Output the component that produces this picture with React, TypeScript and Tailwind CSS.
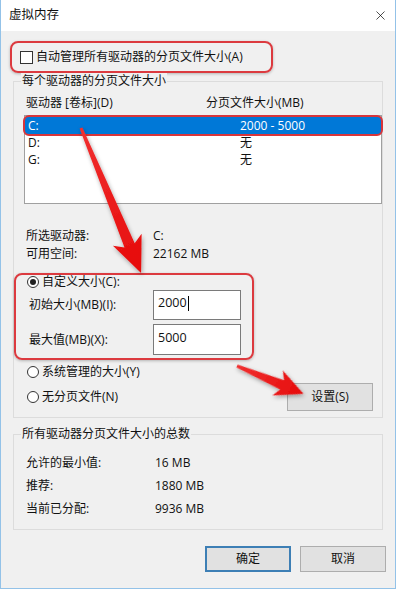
import { X } from "lucide-react"

function Radio({ checked = false }: { checked?: boolean }) {
  return (
    <span className="w-[12px] h-[12px] rounded-full border border-[#333] bg-white flex items-center justify-center shrink-0">
      {checked && <span className="w-[6px] h-[6px] rounded-full bg-[#222]" />}
    </span>
  )
}

function GroupLabel({ children }: { children: React.ReactNode }) {
  return (
    <div className="-mt-[9px] ml-[7px] px-[1px] w-fit h-[16px] leading-[16px] bg-[#f0f0f0]">{children}</div>
  )
}

export default function App() {
  const drives = [
    { name: "C:", size: "2000 - 5000", selected: true },
    { name: "D:", size: "无" },
    { name: "G:", size: "无" },
  ]

  return (
    <div className="relative w-[396px] h-[589px] overflow-hidden bg-[#f0f0f0] border-x border-b border-[#93c2e8] text-[12px] text-[#111] font-['Open_Sans','Noto_Sans_CJK_SC',sans-serif]">
      {/* Title bar */}
      <div className="h-[31px] bg-white flex items-center justify-between pl-[8px] pr-[7px]">
        <span className="leading-none text-[12.5px]">虚拟内存</span>
        <X size={15} strokeWidth={1.1} className="text-black" />
      </div>

      <div className="pl-[9px]">
        {/* Auto manage */}
        <div className="mt-[10px] w-[263px] h-[32px] border-2 border-[#dc3a3f] rounded-[8px] shadow-[0_1px_3px_rgba(0,0,0,0.25)] flex items-center pl-[8px] gap-[3px]">
          <span className="w-[13px] h-[13px] border border-[#333] bg-white shrink-0" />
          <span className="leading-none">自动管理所有驱动器的分页文件大小(A)</span>
        </div>

        {/* Group 1 */}
        <div className="mt-[8px] ml-[3px] w-[370px] h-[337px] border border-[#dcdcdc]">
          <GroupLabel>每个驱动器的分页文件大小</GroupLabel>

          <div className="mt-[6px] h-[16px] flex items-center pl-[12px]">
            <span className="w-[180px]">驱动器 [卷标](D)</span>
            <span>分页文件大小(MB)</span>
          </div>

          <div className="mt-[4px] ml-[10px] w-[358px] h-[89px] border border-[#a0a0a0] bg-white pt-[1px]">
            {drives.map((d) => (
              <div
                key={d.name}
                className={`relative h-[17px] flex items-center pl-[3px] ${d.selected ? "bg-[#0078d7] text-white" : ""}`}
              >
                <span className="w-[212px]">{d.name}</span>
                <span>{d.size}</span>
                {d.selected && (
                  <span className="absolute -inset-x-[2px] -inset-y-[2px] border-2 border-[#d8353b] rounded-[6px]" />
                )}
              </div>
            ))}
          </div>

          <div className="mt-[23px] h-[18px] flex items-center pl-[12px]">
            <span className="w-[127px]">所选驱动器:</span>
            <span>C:</span>
          </div>
          <div className="h-[18px] flex items-center pl-[12px]">
            <span className="w-[127px]">可用空间:</span>
            <span>22162 MB</span>
          </div>

          {/* Custom size */}
          <div className="mt-[10px] w-[240px] h-[87px] border-2 border-[#dc3a3f] rounded-[8px] shadow-[0_1px_3px_rgba(0,0,0,0.25)]">
            <div className="h-[14px] flex items-center pl-[11px] gap-[3px]">
              <Radio checked />
              <span>自定义大小(C):</span>
            </div>
            <div className="mt-[1px] h-[30px] flex items-center pl-[13px]">
              <span className="w-[124px]">初始大小(MB)(I):</span>
              <div className="w-[88px] h-[30px] border border-[#7a7a7a] bg-white pl-[4px] pt-[4px] flex items-start">
                <span className="leading-[16px] text-[12.5px]">2000</span>
                <span className="ml-[1px] mt-[1px] w-[1px] h-[15px] bg-black" />
              </div>
            </div>
            <div className="mt-[4px] h-[31px] flex items-center pl-[13px]">
              <span className="w-[124px]">最大值(MB)(X):</span>
              <div className="w-[88px] h-[31px] border border-[#7a7a7a] bg-white pl-[4px] pt-[4px]">
                <span className="leading-[16px] text-[12.5px]">5000</span>
              </div>
            </div>
          </div>

          <div className="mt-[4px] h-[16px] flex items-center pl-[13px] gap-[3px]">
            <Radio />
            <span>系统管理的大小(Y)</span>
          </div>
          <div className="mt-[3px] h-[28px] flex items-center pl-[13px]">
            <Radio />
            <span className="ml-[3px]">无分页文件(N)</span>
            <button className="ml-auto mr-[9px] w-[86px] h-[28px] bg-[#e1e1e1] border border-[#adadad] flex items-center justify-center">
              设置(S)
            </button>
          </div>
        </div>

        {/* Group 2 */}
        <div className="mt-[16px] ml-[3px] w-[370px] h-[96px] border border-[#dcdcdc]">
          <GroupLabel>所有驱动器分页文件大小的总数</GroupLabel>
          {[
            ["允许的最小值:", "16 MB"],
            ["推荐:", "1880 MB"],
            ["当前已分配:", "9936 MB"],
          ].map(([k, v], i) => (
            <div key={k} className={`${i === 0 ? "mt-[12px]" : "mt-[5px]"} h-[18px] flex items-center pl-[12px]`}>
              <span className="w-[129px]">{k}</span>
              <span>{v}</span>
            </div>
          ))}
        </div>

        {/* Footer buttons */}
        <div className="mt-[16px] ml-[195px] flex gap-[9px]">
          <button className="w-[86px] h-[26px] bg-[#e1e1e1] border-2 border-[#3d7fb5] flex items-center justify-center">
            确定
          </button>
          <button className="w-[86px] h-[26px] bg-[#e1e1e1] border border-[#adadad] flex items-center justify-center">
            取消
          </button>
        </div>
      </div>

      {/* Annotation arrows */}
      <svg className="absolute inset-0 pointer-events-none" width="396" height="589" viewBox="0 0 396 589">
        <defs>
          <filter id="sh" x="-20%" y="-20%" width="140%" height="140%">
            <feDropShadow dx="1" dy="2" stdDeviation="2" floodColor="#000" floodOpacity="0.35" />
          </filter>
          <linearGradient id="rg" x1="0" y1="0" x2="1" y2="0">
            <stop offset="0" stopColor="#f03030" />
            <stop offset="1" stopColor="#e60a0a" />
          </linearGradient>
        </defs>
        <g filter="url(#sh)">
          <polygon
            transform="translate(80 128) rotate(67.5)"
            points="0,-1.5 127,-5.5 121,-15.5 157,0 121,15.5 127,5.5 0,1.5"
            fill="url(#rg)"
          />
          <polygon
            transform="translate(236 366) rotate(22.7)"
            points="0,-1.5 49,-5 44,-13.5 72,0 44,13.5 49,5 0,1.5"
            fill="url(#rg)"
          />
        </g>
      </svg>
    </div>
  )
}
